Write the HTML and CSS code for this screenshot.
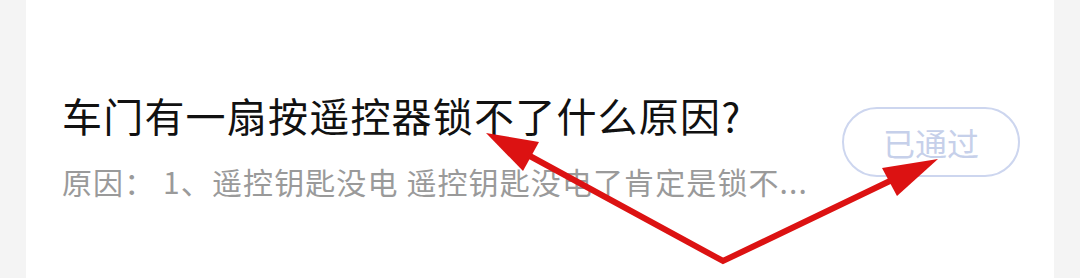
FILE: index.html
```html
<!DOCTYPE html>
<html lang="zh-CN">
<head>
<meta charset="UTF-8">
<meta name="viewport" content="width=device-width, initial-scale=1.0">
<title>问答</title>
<link rel="stylesheet" href="styles.css">
</head>
<body>
<div class="page">
    <div class="card">
        <div class="item">
            <div class="item-text">
                <h3 class="item-title">车门有一扇按遥控器锁不了什么原因?</h3>
                <p class="item-desc">原因：&nbsp;1、遥控钥匙没电 遥控钥匙没电了肯定是锁不...</p>
            </div>
            <span class="badge">已通过</span>
        </div>
    </div>
</div>

<!-- annotation arrows drawn over the screenshot -->
<svg class="arrows" width="1080" height="278" viewBox="0 0 1080 278">
    <polyline points="528,155 723,261 892,180" fill="none" stroke="#dc1212" stroke-width="6" stroke-linejoin="miter"/>
    <polygon points="486,133 539,142 523,171" fill="#dc1212"/>
    <polygon points="938,159 882,168 897,196" fill="#dc1212"/>
</svg>
</body>
</html>
```

FILE: styles.css
```css
body {
    margin: 0;
    padding: 0;
    background: #f4f4f4;
    font-family: "Noto Sans CJK SC", "Noto Sans", sans-serif;
}
.page {
    width: 1080px;
    height: 278px;
    padding: 0 26px;
    box-sizing: border-box;
    overflow: hidden;
}
.card {
    height: 100%;
    background: #fff;
    padding: 90px 34px 0 36px;
    box-sizing: border-box;
}
.item {
    display: flex;
    justify-content: space-between;
    align-items: flex-start;
}
.item-title {
    margin: 0;
    font-size: 40px;
    font-weight: normal;
    letter-spacing: 1.2px;
    line-height: 50px;
    color: #111;
    white-space: nowrap;
}
.item-desc {
    margin: 21px 0 0;
    font-size: 30px;
    letter-spacing: 1.1px;
    line-height: 40px;
    color: #9a9a9a;
    white-space: nowrap;
}
.badge {
    margin-top: 17px;
    width: 178px;
    height: 70px;
    box-sizing: border-box;
    border: 2px solid #cdd6ef;
    border-radius: 35px;
    display: flex;
    align-items: center;
    justify-content: center;
    font-size: 32px;
    color: #c6d0ea;
}
.arrows {
    position: absolute;
    left: 0;
    top: 0;
    pointer-events: none;
}
```
